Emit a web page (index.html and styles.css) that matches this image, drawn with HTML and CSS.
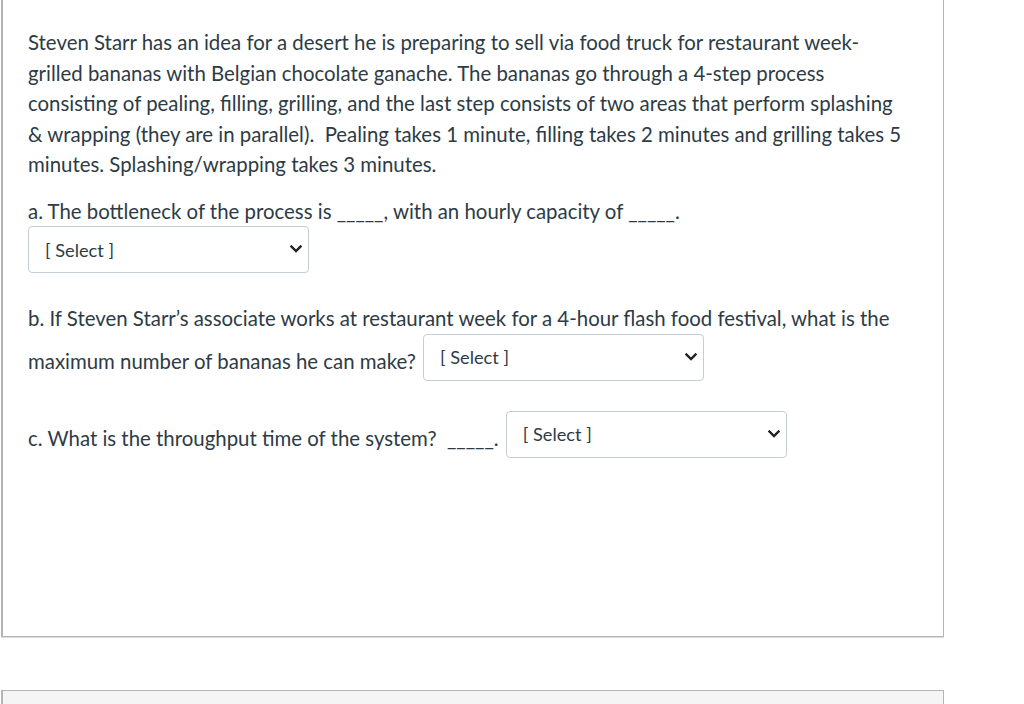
FILE: index.html
```html
<!DOCTYPE html>
<html>
<head>
<meta charset="utf-8">
<link rel="stylesheet" href="styles.css">
</head>
<body>
<div class="page">
  <div class="card">
    <p class="intro">Steven Starr has an idea for a desert he is preparing to sell via food truck for restaurant week- grilled bananas with Belgian chocolate ganache. The bananas go through a 4-step process consisting of pealing, filling, grilling, and the last step consists of two areas that perform splashing &amp; wrapping (they are in parallel).&nbsp; Pealing takes 1 minute, filling takes 2 minutes and grilling takes 5 minutes. Splashing/wrapping takes 3 minutes.</p>
    <p class="q qa">a. The bottleneck of the process is _____, with an hourly capacity of _____.<br><span class="selwrap"><select class="sel"><option>[ Select ]</option></select><svg class="chev" width="12" height="8" viewBox="0 0 12 8"><polyline points="1.5,1.5 6,6 10.5,1.5" fill="none" stroke="#222" stroke-width="2.4" stroke-linecap="square"/></svg></span></p>
    <p class="q qb">b. If Steven Starr’s associate works at restaurant week for a 4-hour flash food festival, what is the maximum number of bananas he can make? <span class="selwrap"><select class="sel"><option>[ Select ]</option></select><svg class="chev" width="12" height="8" viewBox="0 0 12 8"><polyline points="1.5,1.5 6,6 10.5,1.5" fill="none" stroke="#222" stroke-width="2.4" stroke-linecap="square"/></svg></span></p>
    <p class="q qc">c. What is the throughput time of the system?&nbsp; _____. <span class="selwrap"><select class="sel"><option>[ Select ]</option></select><svg class="chev" width="12" height="8" viewBox="0 0 12 8"><polyline points="1.5,1.5 6,6 10.5,1.5" fill="none" stroke="#222" stroke-width="2.4" stroke-linecap="square"/></svg></span></p>
  </div>
  <div class="card2"></div>
</div>
</body>
</html>
```

FILE: styles.css
```css
html, body {
  margin: 0;
  padding: 0;
  background: #ffffff;
}
.page {
  padding-left: 1px;
  width: 943px;
}
.card {
  margin-top: -2px;
  height: 639px;
  box-sizing: border-box;
  border: 1px solid #b4b4b4;
  border-left-width: 2px;
  box-shadow: 0 1px 0 #dcdcdc;
  padding: 28px 34px 0 25px;
  font-family: Lato, "Noto Sans", sans-serif;
  font-size: 20.4px;
  line-height: 30.5px;
  color: #2d3b45;
}
.card p {
  margin: 0;
}
.intro {
  margin-bottom: 16px !important;
}
.qa {
  margin-bottom: 30px !important;
}
.qb {
  margin-bottom: 30px !important;
}
.selwrap {
  display: inline-block;
  position: relative;
  vertical-align: 4px;
}
.qb .selwrap,
.qc .selwrap {
  margin-left: 2px;
}
.qa .selwrap {
  vertical-align: baseline;
}
.sel {
  -webkit-appearance: none;
  appearance: none;
  display: inline-block;
  vertical-align: baseline;
  width: 281px;
  height: 47px;
  box-sizing: border-box;
  border: 1px solid #c7cdd1;
  border-radius: 4px;
  background: #fff;
  font-family: Lato, "Noto Sans", sans-serif;
  font-size: 18.2px;
  color: #2d3b45;
  padding: 0 30px 0 16px;
  margin: 0;
}
.chev {
  position: absolute;
  right: 7px;
  top: 19px;
}
.card2 {
  margin-top: 53px;
  height: 40px;
  border: 1px solid #b4b4b4;
  border-left-width: 2px;
  background: #f5f5f5;
}
```
